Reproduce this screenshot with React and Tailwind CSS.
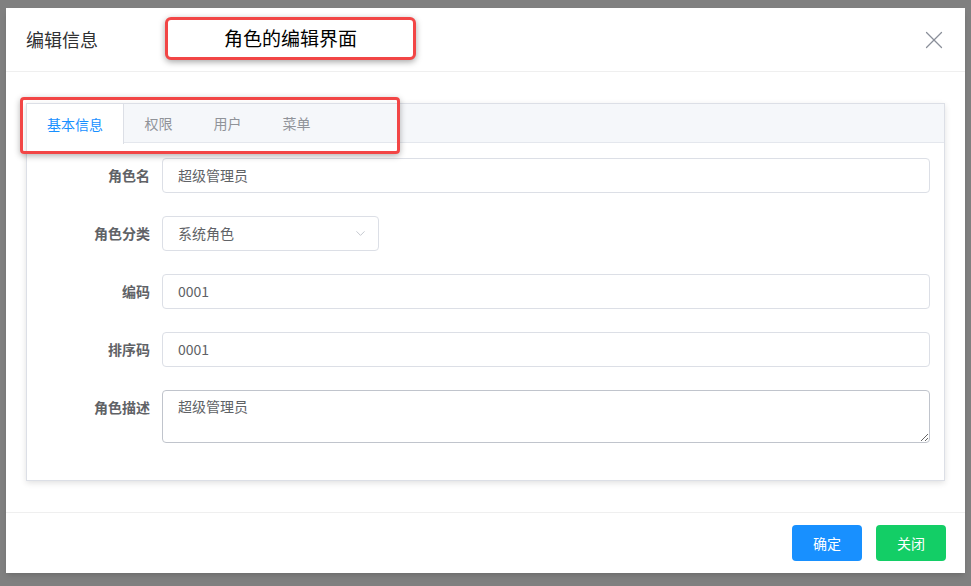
import { X, ChevronDown } from 'lucide-react';

const font = { fontFamily: '"Noto Sans CJK SC", "Liberation Sans", sans-serif' };

const tabs = ['基本信息', '权限', '用户', '菜单'];

const Row = ({ label, children, top = false }) => (
  <div className={`flex ${top ? 'items-start' : 'items-center'}`}>
    <label className={`w-[135px] shrink-0 pr-3 text-right text-[14px] font-bold text-[#606266] ${top ? 'pt-[7px]' : ''}`}>
      {label}
    </label>
    <div className="flex-1">{children}</div>
  </div>
);

const TextInput = ({ value }) => (
  <div className="h-[35px] rounded border border-[#dcdfe6] bg-white pl-[15px] text-[14px] leading-[33px] text-[#606266]">
    {value}
  </div>
);

export default function App() {
  return (
    <div className="relative h-[586px] w-[971px] overflow-hidden bg-[#808080] pl-[6px] pt-[8px]" style={font}>
      <div className="flex h-[565px] w-[959px] flex-col bg-white shadow-md">
        {/* 标题栏 */}
        <div className="flex h-[64px] shrink-0 items-center justify-between border-b border-[#efefef] pl-[20px] pr-[16px]">
          <span className="text-[18px] text-[#303133]">编辑信息</span>
          <X size={30} strokeWidth={1} className="text-[#8a8f99]" />
        </div>

        {/* 内容 */}
        <div className="flex-1 px-[20px] pt-[31px]">
          <div className="h-[378px] border border-[#dcdfe6] bg-white shadow-[0_2px_6px_rgba(0,0,0,0.12)]">
            <div className="flex h-[39px] border-b border-[#e4e7ed] bg-[#f5f7fa]">
              {tabs.map((t, i) => (
                <div
                  key={t}
                  className={`flex h-[39px] items-center text-[14px] ${
                    i === 0
                      ? '-mb-px h-[40px] border-r border-[#dcdfe6] bg-white px-5 text-[#1890ff]'
                      : 'px-[20.5px] text-[#909399]'
                  }`}
                >
                  {t}
                </div>
              ))}
            </div>

            <div className="flex flex-col gap-[23px] pr-[14px] pt-[15px]">
              <Row label="角色名">
                <TextInput value="超级管理员" />
              </Row>
              <Row label="角色分类">
                <div className="flex h-[35px] w-[217px] items-center justify-between rounded border border-[#dcdfe6] pl-[15px] pr-[10px] text-[14px] text-[#606266]">
                  系统角色
                  <ChevronDown size={15} strokeWidth={1.5} className="text-[#c0c4cc]" />
                </div>
              </Row>
              <Row label="编码">
                <TextInput value="0001" />
              </Row>
              <Row label="排序码">
                <TextInput value="0001" />
              </Row>
              <Row label="角色描述" top>
                <textarea
                  defaultValue="超级管理员"
                  className="block h-[53px] w-full rounded border border-[#c0c4cc] px-[15px] pt-[5px] text-[14px] text-[#606266] outline-none"
                  style={font}
                />
              </Row>
            </div>
          </div>
        </div>

        {/* 底部按钮 */}
        <div className="flex h-[61px] shrink-0 items-center justify-end gap-[14px] border-t border-[#efefef] pr-[19px]">
          <button className="h-[36px] w-[70px] rounded bg-[#1890ff] text-[14px] text-white">确定</button>
          <button className="h-[36px] w-[70px] rounded bg-[#13ce66] text-[14px] text-white">关闭</button>
        </div>
      </div>

      {/* 标注框 */}
      <div className="absolute left-[165px] top-[17px] flex h-[43px] w-[251px] items-center justify-center rounded-md border-[3px] border-[#f24646] bg-white text-[19px] font-normal text-black shadow-[0_2px_6px_rgba(0,0,0,0.35)]">
        角色的编辑界面
      </div>
      <div className="absolute left-[20px] top-[97px] h-[57px] w-[380px] rounded-sm border-[3px] border-[#f24646] shadow-[0_2px_6px_rgba(0,0,0,0.3)]" />
    </div>
  );
}
